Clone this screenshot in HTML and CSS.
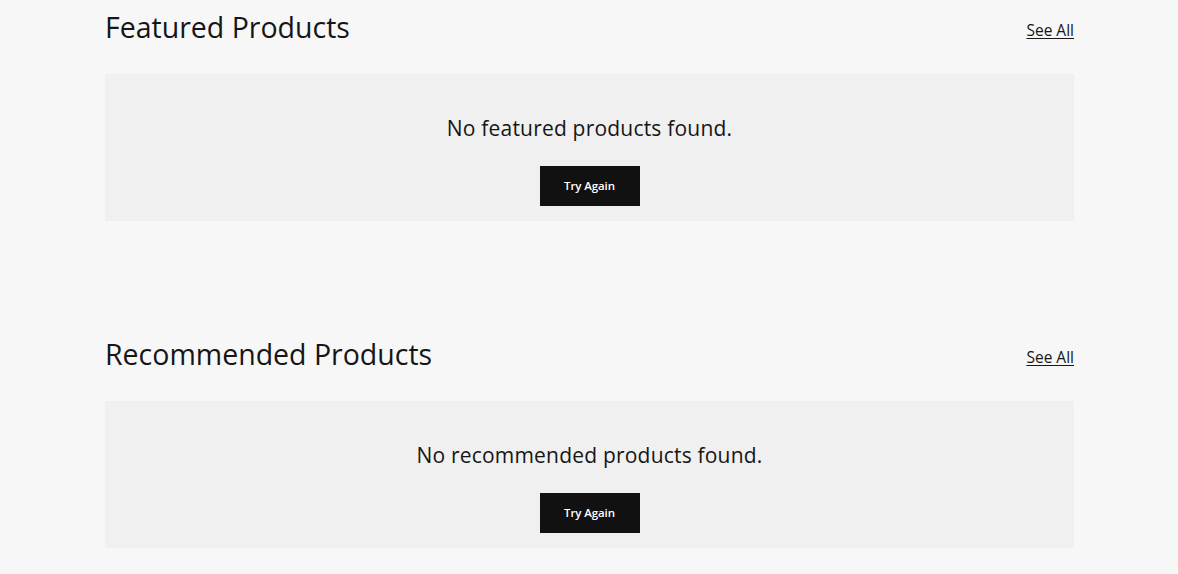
FILE: index.html
```html
<!DOCTYPE html>
<html lang="en">
<head>
<meta charset="utf-8">
<title>Products</title>
<link rel="stylesheet" href="styles.css">
</head>
<body>
<main class="page">
  <section class="section">
    <div class="section-head">
      <h2 class="section-title">Featured Products</h2>
      <a class="see-all" href="#">See All</a>
    </div>
    <div class="empty-card">
      <p class="empty-text">No featured products found.</p>
      <button class="retry-btn" type="button">Try Again</button>
    </div>
  </section>
  <section class="section section-second">
    <div class="section-head">
      <h2 class="section-title">Recommended Products</h2>
      <a class="see-all" href="#">See All</a>
    </div>
    <div class="empty-card">
      <p class="empty-text">No recommended products found.</p>
      <button class="retry-btn" type="button">Try Again</button>
    </div>
  </section>
</main>
</body>
</html>
```
FILE: styles.css
```css
html, body {
  margin: 0;
  padding: 0;
  background: #f7f7f7;
}

body {
  font-family: "Open Sans", "Noto Sans", sans-serif;
  color: #161616;
}

.page {
  max-width: 969px;
  margin: 0 auto;
  padding: 7px 0 0 1px;
}

.section-second {
  margin-top: 113px;
}

.section-head {
  display: flex;
  justify-content: space-between;
  align-items: flex-start;
  margin-bottom: 27px;
}

.section-title {
  margin: 0;
  font-size: 28.5px;
  line-height: 40px;
  font-weight: 400;
  color: #161616;
}

.see-all {
  margin-top: 13px;
  font-size: 15.5px;
  line-height: 20px;
  color: #161616;
  text-decoration: underline;
  text-underline-offset: 2px;
}

.empty-card {
  background: #f0f0f0;
  display: flex;
  flex-direction: column;
  align-items: center;
  padding: 40px 0 15px;
  gap: 24px;
  height: 147px;
  box-sizing: border-box;
}

.empty-text {
  margin: 0;
  font-size: 21px;
  line-height: 28px;
  letter-spacing: 0.2px;
  color: #161616;
}

.retry-btn {
  width: 100px;
  height: 40px;
  border: 0;
  border-radius: 0;
  background: #111111;
  color: #ffffff;
  font-family: "Open Sans", "Noto Sans", sans-serif;
  font-size: 11.5px;
  font-weight: 600;
  letter-spacing: -0.1px;
  padding: 0 0 2px;
  cursor: pointer;
}
```
